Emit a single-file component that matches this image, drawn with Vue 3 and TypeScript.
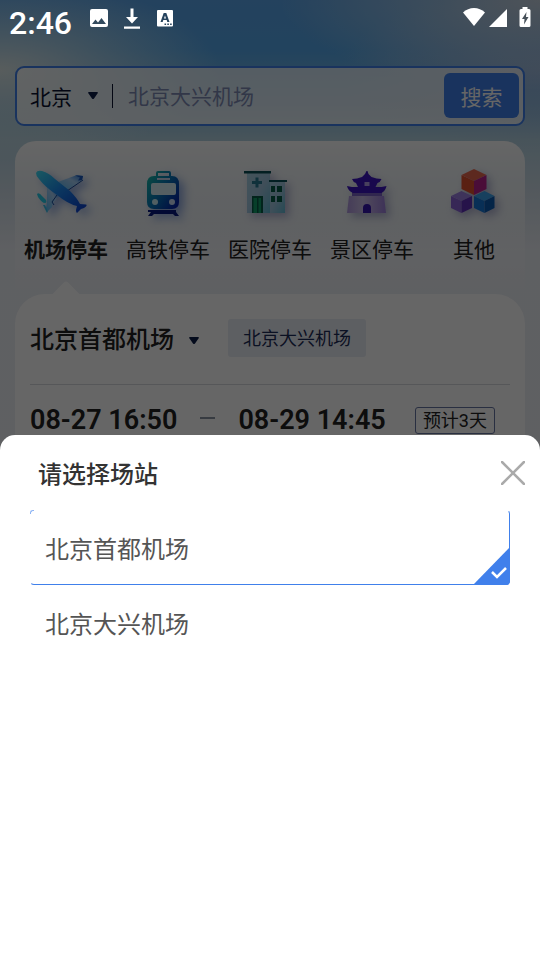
<script setup lang="ts">
import { ref } from 'vue'

interface Category {
  id: string
  label: string
}

const categories: Category[] = [
  { id: 'airport', label: '机场停车' },
  { id: 'rail', label: '高铁停车' },
  { id: 'hospital', label: '医院停车' },
  { id: 'scenic', label: '景区停车' },
  { id: 'other', label: '其他' },
]

const stations: string[] = ['北京首都机场', '北京大兴机场']

const activeCategory = ref('airport')
const station = ref(stations[0])
const keyword = ref('')
const sheetOpen = ref(true)
</script>

<template>
  <div class="screen">
    <header class="status">
      <span class="clock">2:46</span>
      <svg class="status-icon" viewBox="0 0 24 24" aria-hidden="true">
        <path fill="#fff" fill-rule="evenodd" d="M5 3h14a2 2 0 0 1 2 2v14a2 2 0 0 1-2 2H5a2 2 0 0 1-2-2V5a2 2 0 0 1 2-2zM8.500 13.500 5 18h14l-4.500-6-3.500 4.500z" />
      </svg>
      <svg class="status-icon" viewBox="0 0 24 24" aria-hidden="true">
        <path fill="#fff" d="M10.500 2.500h3V11h4.500l-6 6.500L6 11h4.500zM4 20.500h16v2.200H4z" />
      </svg>
      <svg class="status-icon" viewBox="0 0 24 24" aria-hidden="true">
        <path fill="#fff" fill-rule="evenodd" d="M5 4h14a1 1 0 0 1 1 1v14.500a1 1 0 0 1-1 1H5a1 1 0 0 1-1-1V5a1 1 0 0 1 1-1zM10.700 7 7.500 16h2.200l.6-1.900h3.400l.6 1.900h2.200L13.300 7zm1.300 2.500 1 3h-2zM11.500 17.500h1.600V19h-1.600zm2.800 0h1.600V19h-1.600zm2.800 0h1.600V19h-1.600z" />
      </svg>
      <span class="status-gap"></span>
      <svg class="wifi" viewBox="0 0 24 20" aria-hidden="true">
        <path fill="#fff" d="M1 5.500C7-.5 17-.5 23 5.500L12 19z" />
      </svg>
      <svg class="signal" viewBox="0 0 20 20" aria-hidden="true">
        <path fill="#fff" d="M19 1v18H1z" />
      </svg>
      <svg class="battery" viewBox="0 0 12 20" aria-hidden="true">
        <path fill="#fff" fill-rule="evenodd" d="M3.500 0h5v2H10a1.500 1.500 0 0 1 1.500 1.500v15A1.500 1.500 0 0 1 10 20H2A1.500 1.500 0 0 1 .5 18.500v-15A1.500 1.500 0 0 1 2 2h1.500zM7.500 5 3 12h2.500l-.5 5.500L9.500 10H7z" />
      </svg>
    </header>

    <main class="page">
      <form class="search" @submit.prevent>
        <button type="button" class="city">
          北京
          <svg class="caret" viewBox="0 0 10 7" aria-hidden="true"><path d="M1 0h8q1.500 0 .5 1.500L6 6.500q-1 1-2 0L.5 1.500Q-.5 0 1 0z" /></svg>
        </button>
        <input v-model="keyword" class="keyword" type="text" placeholder="北京大兴机场" aria-label="搜索" />
        <button type="submit" class="go">搜索</button>
      </form>

      <nav class="categories">
        <button
          v-for="item in categories"
          :key="item.id"
          type="button"
          class="category"
          :class="{ active: item.id === activeCategory }"
          @click="activeCategory = item.id"
        >
          <svg v-if="item.id === 'airport'" class="pic shade-blue" viewBox="0 0 60 60" aria-hidden="true">
            <defs>
              <linearGradient id="fuselage" x1="0" y1="0" x2="1" y2="1">
                <stop offset="0" stop-color="#3fe0f5" /><stop offset=".45" stop-color="#1b8af0" /><stop offset="1" stop-color="#0a35c8" />
              </linearGradient>
              <linearGradient id="wing" x1="0" y1="1" x2="1" y2="0">
                <stop offset="0" stop-color="#55b8f2" /><stop offset=".6" stop-color="#a5cef5" /><stop offset="1" stop-color="#2375dc" />
              </linearGradient>
            </defs>
            <path fill="url(#wing)" d="M22 19 41 12l6 1-1 4-15 10z" />
            <path fill="#1a58bd" d="m39 12.500 8 .5-1 4-4 .5 2-3z" />
            <path fill="url(#wing)" d="m11 24 12 9-6 7-1 4-4 4-2-3 1-6z" />
            <path fill="none" stroke="#174b9c" stroke-width="1" d="m21 32-5 7 2 3M47 17l-16 11" />
            <path fill="#27cbe8" d="M1 31q2-2 5 2l4 4q1 3-1 3-3 0-7-6z" />
            <path fill="#35bce9" d="m9 42 3 6-1 2-4-8z" />
            <path fill="url(#fuselage)" d="M0 10q1-3 6-2 7 2 13 8l15 12q7 7 10 13l6 .5q2 1-2 3.500l-3 1-4 4q-1 0-1-3l1-4q-9-2-20-11Q9 24 3 16 0 13 0 10z" />
          </svg>
          <svg v-else-if="item.id === 'rail'" class="pic shade-blue" viewBox="0 0 60 60" aria-hidden="true">
            <defs>
              <linearGradient id="train" x1="0" y1="0" x2="1" y2=".8">
                <stop offset="0" stop-color="#1bc3a2" /><stop offset=".5" stop-color="#087bb8" /><stop offset="1" stop-color="#0624a8" />
              </linearGradient>
            </defs>
            <path fill="#06177f" d="M13 47h25v2l3 4h-4l-2-2H16l-2 2h-4l3-4h-3v-2z" />
            <path fill="url(#train)" fill-rule="evenodd" d="M20 8h11q2 0 2 2v3h1q7 0 7 8v18q0 7-7 7H16q-7 0-7-7V21q0-8 7-8h2v-3q0-2 2-2zm0 2v3h11v-3zm-1 5v2h13v-2z" />
            <rect x="13" y="20" width="25" height="12" rx="2" fill="#d5eef5" />
            <circle cx="17" cy="39" r="3" fill="#cbeef6" /><circle cx="34" cy="39" r="3" fill="#cbdcf6" />
          </svg>
          <svg v-else-if="item.id === 'hospital'" class="pic" viewBox="0 0 60 60" aria-hidden="true">
            <defs>
              <linearGradient id="ward" x1="0" y1="0" x2="1" y2="1">
                <stop offset="0" stop-color="#a8d2e4" /><stop offset=".5" stop-color="#a0c4de" /><stop offset="1" stop-color="#5fb8d2" />
              </linearGradient>
            </defs>
            <path fill="url(#ward)" d="M29 19h16v31H29z" />
            <path fill="url(#ward)" d="M7 10h23v40H7z" />
            <path fill="#084f55" d="M4 8h27v2.500H4zM29 17h18v2H29z" />
            <path fill="#287b93" d="M15.500 14.500h3v3.500H22v3h-3.500v3.500h-3V21H12v-3h3.500z" />
            <path fill="#065b46" d="M31 23h4v6h-4zm6 0h5v6h-5zm-6 10h4v6h-4zm6 0h5v6h-5zM12 33h11v17H12z" />
            <path fill="#0f9d69" d="M13.500 35H17v15h-3.500zM18.500 35H21v15h-2.500z" />
          </svg>
          <svg v-else-if="item.id === 'scenic'" class="pic" viewBox="0 0 60 60" aria-hidden="true">
            <defs>
              <linearGradient id="walls" x1="0" y1="0" x2="1" y2="0">
                <stop offset="0" stop-color="#ad96dc" /><stop offset=".4" stop-color="#cabde6" /><stop offset="1" stop-color="#9a7cda" />
              </linearGradient>
            </defs>
            <path fill="url(#walls)" d="M7 33h35l2 17H5z" />
            <path fill="#7c63c5" d="M10 29h30v4H10z" />
            <path fill="#3d16c0" d="M24.500 8h1l1 3 3 3q5 2 10 2-1 3-4 4l-2 4h6l5-1q-1 5-5 7H11q-5-2-6-7l5 1h6l-2-4q-3-1-4-4 5 0 10-2l3-3z" />
            <path fill="#b5a0e8" d="M22.500 19h5v4h-5z" />
            <path fill="#3514b0" d="M21 50v-5q0-4 4-4t4 4v5z" />
          </svg>
          <svg v-else class="pic" viewBox="0 0 60 60" aria-hidden="true">
            <path fill="#e9684e" d="m30 6 12.500 6L30 18l-12.500-6z" />
            <path fill="#e2502f" d="m17.500 12 12.500 6v14l-12.500-6z" />
            <path fill="#b9218d" d="M42.500 12 30 18v14l12.500-6z" />
            <path fill="#9c7fe0" d="m17.500 28 10.500 5-10.500 5L7 33z" />
            <path fill="#8a62d6" d="m7 33 10.500 5v12L7 45z" />
            <path fill="#5f30b8" d="m28 33-10.500 5v12L28 45z" />
            <path fill="#3aa0ec" d="m40.500 28 10 5-10 5L30 33z" />
            <path fill="#1577d8" d="m30 33 10.500 5v12L30 45z" />
            <path fill="#0a5ab2" d="m50.500 33-10 5v12l10-5z" />
          </svg>
          <span>{{ item.label }}</span>
        </button>
      </nav>

      <section class="booking">
        <div class="stations">
          <button type="button" class="current" @click="sheetOpen = true">
            {{ station }}
            <svg class="caret" viewBox="0 0 10 7" aria-hidden="true"><path d="M1 0h8q1.500 0 .5 1.500L6 6.500q-1 1-2 0L.5 1.500Q-.5 0 1 0z" /></svg>
          </button>
          <button type="button" class="chip" @click="station = stations[1]">北京大兴机场</button>
        </div>
        <div class="dates">
          <time>08-27 16:50</time>
          <span class="dash"></span>
          <time>08-29 14:45</time>
          <span class="days">预计3天</span>
        </div>
      </section>
    </main>

    <div v-if="sheetOpen" class="mask">
      <section class="sheet" role="dialog" aria-labelledby="sheet-title">
        <div class="sheet-head">
          <h2 id="sheet-title">请选择场站</h2>
          <button type="button" class="close" aria-label="关闭" @click="sheetOpen = false">
            <svg viewBox="0 0 24 24" aria-hidden="true"><path d="M1 1l22 22M23 1 1 23" fill="none" stroke="#aaa" stroke-width="2.500" stroke-linecap="round" /></svg>
          </button>
        </div>
        <div class="options">
          <label v-for="name in stations" :key="name" class="option" :class="{ selected: name === station }">
            <input v-model="station" type="radio" name="station" :value="name" />
            {{ name }}
            <svg v-if="name === station" class="tick" viewBox="0 0 37 38" aria-hidden="true">
              <path fill="#4080eb" d="M37 0v34q0 4-4 4H0z" />
              <path fill="none" stroke="#fff" stroke-width="2.500" d="m19 25 5 5 9-9" />
            </svg>
          </label>
        </div>
      </section>
    </div>
  </div>
</template>

<style>
body {
  margin: 0;
}
</style>

<style scoped>
.screen {
  position: relative;
  min-height: 100vh;
  overflow: hidden;
  box-sizing: border-box;
  font-family: Roboto, "Noto Sans CJK SC", sans-serif;
  color: #222;
  background:
    radial-gradient(ellipse 220px 90px at 0 70px, rgba(232, 238, 232, 0.9), rgba(232, 238, 232, 0) 100%),
    radial-gradient(ellipse 260px 90px at 100% 0, rgba(205, 212, 220, 0.9), rgba(205, 212, 220, 0) 100%),
    radial-gradient(ellipse 200px 80px at 100% 70px, rgba(170, 185, 220, 0.7), rgba(170, 185, 220, 0) 100%),
    linear-gradient(180deg, #5aa5ea 0, #55a8ea 50px, #80b8e0 100px, #b4d3e2 140px, #cfdde8 190px, #eceff5 250px, #eff1f6 100%);
}

button,
input {
  margin: 0;
  padding: 0;
  border: 0;
  background: none;
  font: inherit;
  color: inherit;
}

.status {
  position: relative;
  z-index: 2;
  display: flex;
  align-items: flex-start;
  gap: 9px;
  height: 36px;
  padding: 6px 9px 0;
  color: #fff;
}

.clock {
  margin-right: 6px;
  font-size: 32px;
  line-height: 35px;
  font-weight: 500;
}

.status-icon {
  width: 24px;
  height: 24px;
}

.status-gap {
  flex: 1;
}

.wifi {
  width: 24px;
  height: 20px;
  margin-top: 1px;
}

.signal {
  width: 20px;
  height: 20px;
  margin: 2px 2px 0 -7px;
}

.battery {
  width: 12px;
  height: 20px;
  margin-top: 1px;
}

.page {
  padding: 24px 15px 0;
}

.search {
  display: flex;
  height: 60px;
  box-sizing: border-box;
  padding: 5px 4px 6px 13px;
  border: 2px solid #4080eb;
  border-radius: 9px;
  background: rgba(255, 255, 255, 0.72);
  font-size: 21px;
}

.city {
  position: relative;
  display: flex;
  align-items: center;
  gap: 16px;
  padding-right: 15px;
  color: #0a1230;
}

.city::after {
  content: "";
  width: 1px;
  height: 24px;
  margin-right: -16px;
  margin-left: -2px;
  background: #0a1230;
}

.caret {
  width: 10px;
  height: 7px;
  fill: #0a1c48;
}

.keyword {
  flex: 1;
  min-width: 0;
  padding: 2px 0 0 16px;
  outline: none;
}

.keyword::placeholder {
  color: #7e8bb5;
  opacity: 1;
}

.go {
  width: 75px;
  border-radius: 6px;
  background: #4080eb;
  color: #fff;
}

.categories {
  display: grid;
  grid-template-columns: repeat(5, 1fr);
  margin-top: 15px;
  padding: 22px 0 29px;
  border-radius: 21px 21px 0 0;
  background: linear-gradient(180deg, #fff, rgba(255, 255, 255, 0));
}

.category {
  position: relative;
  display: flex;
  flex-direction: column;
  align-items: center;
  gap: 12px;
  font-size: 21px;
  line-height: 30px;
  white-space: nowrap;
}

.category.active {
  font-weight: 700;
}

.category.active::after {
  content: "";
  position: absolute;
  bottom: -42px;
  width: 22px;
  height: 22px;
  border-radius: 3px;
  background: #fff;
  transform: rotate(45deg);
}

.pic {
  width: 60px;
  height: 60px;
  overflow: visible;
  filter: drop-shadow(4px 4px 4px rgba(80, 80, 150, 0.4));
}

.shade-blue {
  filter: drop-shadow(5px 4px 4px rgba(30, 80, 190, 0.45));
}

.booking {
  position: relative;
  padding: 25px 15px;
  border-radius: 30px;
  background: #fff;
}

.stations {
  display: flex;
  align-items: center;
  gap: 29px;
  padding-bottom: 27px;
  border-bottom: 1px solid #d8dadf;
}

.current {
  display: flex;
  align-items: center;
  gap: 15px;
  padding-top: 4px;
  font-size: 24px;
  line-height: 34px;
  font-weight: 500;
}

.chip {
  padding: 2px 15px 0;
  border-radius: 3px;
  background: #e9edf5;
  color: #1c2b57;
  font-size: 18px;
  line-height: 36px;
}

.dates {
  display: flex;
  align-items: center;
  padding-top: 17px;
  font-size: 27px;
  line-height: 36px;
  font-weight: 600;
}

.dash {
  width: 15px;
  height: 2px;
  margin: 0 23px 4px;
  background: #8a93a3;
}

.days {
  margin-right: 15px;
  margin-left: auto;
  padding: 0 7px;
  border: 1px solid #6675a3;
  border-radius: 3px;
  font-size: 18px;
  line-height: 25px;
  font-weight: 400;
}

.mask {
  position: absolute;
  z-index: 1;
  inset: 0;
  display: flex;
  flex-direction: column;
  justify-content: flex-end;
  background: rgba(0, 0, 0, 0.6);
}

.sheet {
  min-height: 525px;
  border-radius: 15px 15px 0 0;
  background: #fff;
}

.sheet-head {
  display: flex;
  align-items: center;
  justify-content: space-between;
  height: 75px;
  padding: 0 15px 0 38px;
}

h2 {
  margin: 0;
  font-size: 24px;
  font-weight: 500;
  color: #333;
}

.close {
  width: 24px;
  height: 24px;
}

.close svg {
  display: block;
}

.options {
  padding: 0 30px;
}

.option {
  position: relative;
  display: flex;
  align-items: center;
  height: 75px;
  box-sizing: border-box;
  padding: 0 14px;
  border: 1px solid transparent;
  border-radius: 4px;
  color: #555;
  font-size: 24px;
}

.option input {
  position: absolute;
  opacity: 0;
}

.option.selected {
  border-right-color: #4080eb;
  border-bottom-color: #4080eb;
}

.option.selected::before {
  content: "";
  position: absolute;
  top: -1px;
  left: -1px;
  width: 3px;
  height: 3px;
  border: solid #8db4f4;
  border-width: 1px 0 0 1px;
  border-radius: 3px 0 0;
}

.tick {
  position: absolute;
  right: -1px;
  bottom: -1px;
  width: 37px;
  height: 38px;
}
</style>
